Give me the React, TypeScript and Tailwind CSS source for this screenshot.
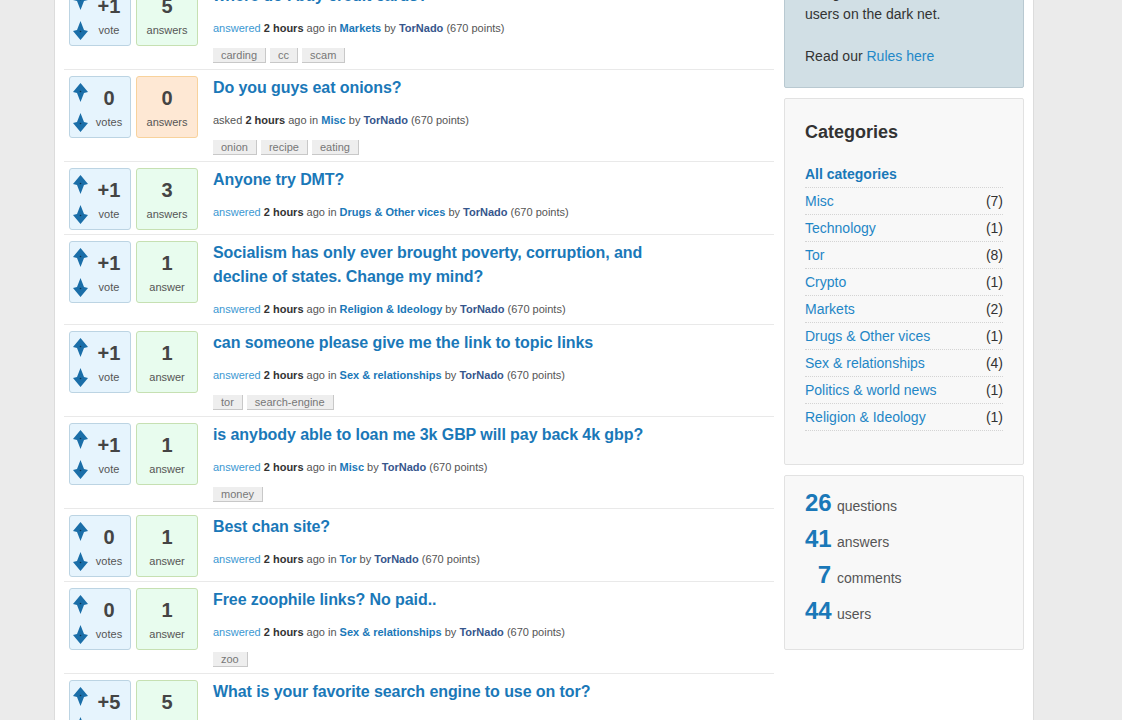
type Question = {
  title: string;
  votes: string;
  voteLabel: string;
  answers: string;
  answerLabel: string;
  what: string;
  category: string;
  tags: string[];
};

const questions: Question[] = [
  { title: "where do I buy credit cards?", votes: "+1", voteLabel: "vote", answers: "5", answerLabel: "answers", what: "answered", category: "Markets", tags: ["carding", "cc", "scam"] },
  { title: "Do you guys eat onions?", votes: "0", voteLabel: "votes", answers: "0", answerLabel: "answers", what: "asked", category: "Misc", tags: ["onion", "recipe", "eating"] },
  { title: "Anyone try DMT?", votes: "+1", voteLabel: "vote", answers: "3", answerLabel: "answers", what: "answered", category: "Drugs & Other vices", tags: [] },
  { title: "Socialism has only ever brought poverty, corruption, and decline of states. Change my mind?", votes: "+1", voteLabel: "vote", answers: "1", answerLabel: "answer", what: "answered", category: "Religion & Ideology", tags: [] },
  { title: "can someone please give me the link to topic links", votes: "+1", voteLabel: "vote", answers: "1", answerLabel: "answer", what: "answered", category: "Sex & relationships", tags: ["tor", "search-engine"] },
  { title: "is anybody able to loan me 3k GBP will pay back 4k gbp?", votes: "+1", voteLabel: "vote", answers: "1", answerLabel: "answer", what: "answered", category: "Misc", tags: ["money"] },
  { title: "Best chan site?", votes: "0", voteLabel: "votes", answers: "1", answerLabel: "answer", what: "answered", category: "Tor", tags: [] },
  { title: "Free zoophile links? No paid..", votes: "0", voteLabel: "votes", answers: "1", answerLabel: "answer", what: "answered", category: "Sex & relationships", tags: ["zoo"] },
  { title: "What is your favorite search engine to use on tor?", votes: "+5", voteLabel: "votes", answers: "5", answerLabel: "answers", what: "answered", category: "Tor", tags: ["search-engine"] },
];

const categories: [string, string][] = [
  ["Misc", "(7)"],
  ["Technology", "(1)"],
  ["Tor", "(8)"],
  ["Crypto", "(1)"],
  ["Markets", "(2)"],
  ["Drugs & Other vices", "(1)"],
  ["Sex & relationships", "(4)"],
  ["Politics & world news", "(1)"],
  ["Religion & Ideology", "(1)"],
];

const stats: [string, string][] = [
  ["26", "questions"],
  ["41", "answers"],
  ["7", "comments"],
  ["44", "users"],
];

function Arrow({ down }: { down?: boolean }) {
  return (
    <svg width="15" height="19" viewBox="0 0 15 19" className={down ? "rotate-180" : ""}>
      <path d="M7.5 0 L15 9 L11 10 L7.5 19 L4 10 L0 9 Z" fill="#1a6ea8" />
      <circle cx="7.5" cy="8.5" r="0.8" fill="#0b3350" />
    </svg>
  );
}

function Row({ q }: { q: Question }) {
  const zero = q.answers === "0";
  return (
    <div className="flex border-b border-[#e9e9e9] pl-[5px] pt-[6px]">
      <div className="mb-[4px] flex h-[62px] w-[62px] shrink-0 rounded-[3px] border border-[#bcd4e3] bg-[#e6f4fd]">
        <div className="flex flex-col pl-[3px] pt-[6px]">
          <Arrow />
          <div className="mt-[11px]">
            <Arrow down />
          </div>
        </div>
        <div className="flex flex-1 flex-col items-center pt-[9px]">
          <div className="text-[20px] font-bold leading-[24px] text-[#444]">{q.votes}</div>
          <div className="mt-[5px] text-[11px] leading-[14px] text-[#555]">{q.voteLabel}</div>
        </div>
      </div>
      <div
        className={
          "ml-[5px] mb-[4px] flex h-[62px] w-[62px] shrink-0 flex-col items-center rounded-[3px] border pt-[9px] " +
          (zero ? "border-[#f8d29c] bg-[#fee8d4]" : "border-[#c6e0b2] bg-[#e8fcee]")
        }
      >
        <div className="text-[20px] font-bold leading-[24px] text-[#444]">{q.answers}</div>
        <div className="mt-[5px] text-[11px] leading-[14px] text-[#555]">{q.answerLabel}</div>
      </div>
      <div className="ml-[15px] flex w-[440px] flex-col">
        <a className="text-[16px] font-bold leading-[24px] tracking-[-0.08px] text-[#1a78b8]">{q.title}</a>
        <div className="mb-[7px] mt-[12px] text-[11px] leading-[16px] text-[#555]">
          <span className={q.what === "asked" ? "text-[#555]" : "text-[#3b98d2]"}>{q.what}</span>{" "}
          <span className="font-bold text-[#333]">2 hours</span> ago in{" "}
          <span className="font-bold text-[#1a78b8]">{q.category}</span> by{" "}
          <span className="font-bold text-[#36568c]">TorNado</span> (670 points)
        </div>
        {q.tags.length > 0 && (
          <div className="mb-[6px] mt-[5px] flex gap-[4px]">
            {q.tags.map((t) => (
              <span
                key={t}
                className="h-[15px] border-b border-r border-[#c8c8c8] bg-[#eeeeee] px-[8px] text-[11px] leading-[14px] text-[#777]"
              >
                {t}
              </span>
            ))}
          </div>
        )}
      </div>
    </div>
  );
}

export default function App() {
  return (
    <div className="h-[720px] overflow-hidden bg-[#ebebeb] font-['Liberation_Sans',Arial,sans-serif]">
      <div className="ml-[54px] min-h-[720px] w-[980px] border-x border-[#dcdcdc] bg-white px-[9px]">
        <div className="-mt-[59px] flex items-start gap-[10px]">
          <div className="w-[710px] pt-[37px]">
            {questions.map((q) => (
              <Row key={q.title} q={q} />
            ))}
          </div>
          <div className="flex w-[240px] flex-col gap-[10px]">
            <div className="rounded-[2px] border border-[#b9c9d1] bg-[#d1dfe5] px-[20px] py-[20px] text-[14px] leading-[21px] text-[#333]">
              A place to share knowledge
              <br />
              and get answers from other
              <br />
              users on the dark net.
              <br />
              <br />
              Read our <a className="text-[#1f88c8]">Rules here</a>
            </div>
            <div className="rounded-[2px] border border-[#e2e2e2] bg-[#f8f8f8] px-[20px] pb-[20px] pt-[20px]">
              <h2 className="mb-[15px] text-[18px] font-bold leading-[27px] text-[#333]">Categories</h2>
              <ul className="mb-[13px]">
                <li className="border-b border-dotted border-[#d4d4d4] text-[14px] font-bold leading-[26px] text-[#1a78b8]">
                  All categories
                </li>
                {categories.map(([name, count]) => (
                  <li
                    key={name}
                    className="flex justify-between border-b border-dotted border-[#d4d4d4] text-[14px] leading-[26px]"
                  >
                    <a className="text-[#1f86c6]">{name}</a>
                    <span className="text-[#333]">{count}</span>
                  </li>
                ))}
              </ul>
            </div>
            <div className="rounded-[2px] border border-[#e2e2e2] bg-[#f8f8f8] px-[20px] pb-[20px] pt-[9px]">
              {stats.map(([n, label]) => (
                <div key={label} className="flex h-[36px] items-baseline gap-[6px] pt-[4px]">
                  <span className="w-[26px] text-right text-[24px] font-bold leading-[28px] text-[#1a78b8]">{n}</span>
                  <span className="text-[14px] text-[#555]">{label}</span>
                </div>
              ))}
            </div>
          </div>
        </div>
      </div>
    </div>
  );
}
